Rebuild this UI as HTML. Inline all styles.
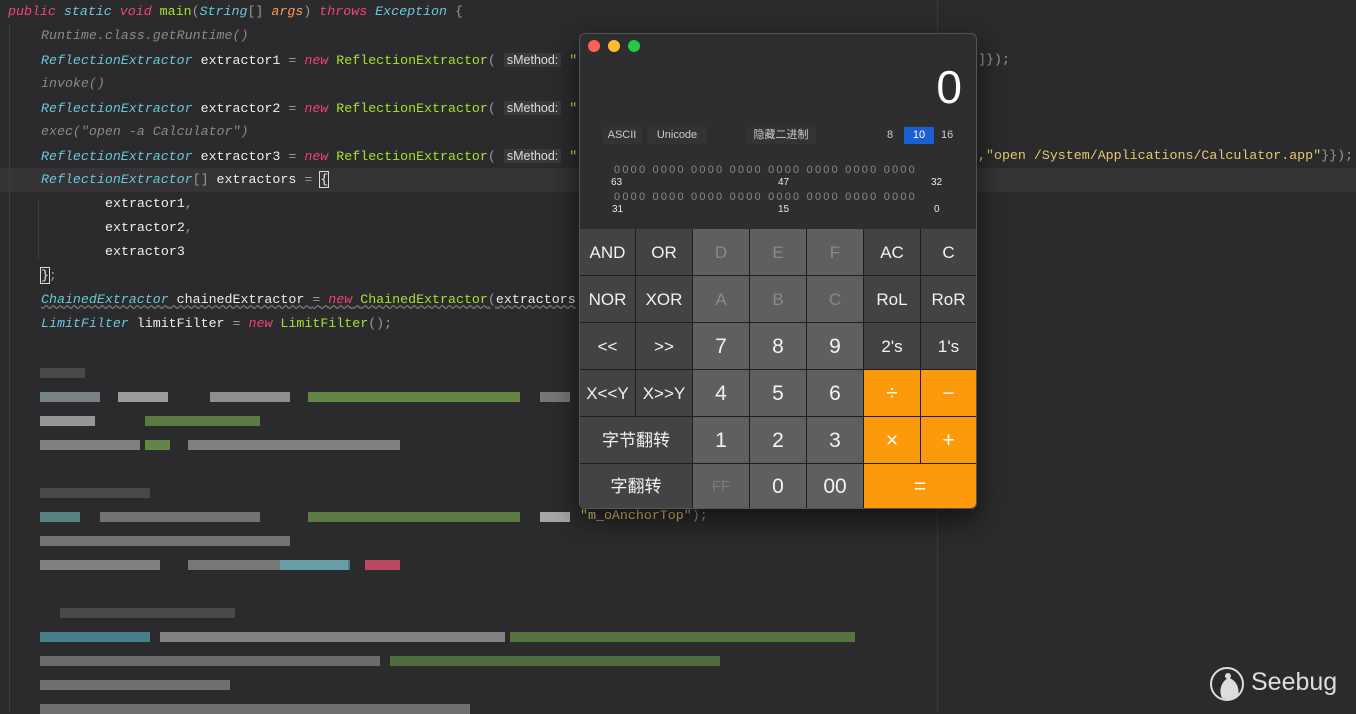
<!DOCTYPE html>
<html><head><meta charset="utf-8"><style>
*{margin:0;padding:0;box-sizing:border-box}
body{width:1356px;height:712px;overflow:hidden;background:#2b2b2d;position:relative;font-family:"Liberation Mono",monospace;font-size:13.3px;color:#eee}
.l{position:absolute;white-space:pre;height:24px;line-height:24px}
.k{color:#f0437a;font-style:italic}
.t{color:#67c7dc;font-style:italic}
.g{color:#a6e22e}
.o{color:#fd9a4f;font-style:italic}
.c{color:#8a8a8a;font-style:italic}
.p{color:#999}
.s{color:#e6c86e}
.h{background:#3a3a3c;color:#ddd;font-family:"Liberation Sans",sans-serif;font-size:12.5px;padding:0 3px;border-radius:2px}
.b{position:absolute;background:#434345;color:#f2f2f2;font-family:"Liberation Sans","Noto Sans CJK SC",sans-serif;font-size:17px;line-height:1;display:flex;align-items:center;justify-content:center}
.b span{display:block;line-height:1}
.d{background:#5f5f61;font-size:21px}
.x{color:#8a8a8c}
.or{background:#fd9a0c;color:#fff;font-size:21px}
.px{position:absolute;height:10px}
.bits{position:absolute;font-family:"Liberation Sans",sans-serif;font-size:11px;color:#8a8a8a;letter-spacing:2.2px;white-space:pre}
.bn{position:absolute;font-family:"Liberation Sans",sans-serif;font-size:10px;color:#e8e8e8}
</style></head><body>
<div style="position:absolute;left:0;top:168px;width:1356px;height:24px;background:#353336"></div>
<div style="position:absolute;left:937px;top:0;width:1px;height:712px;background:#3a3a3c"></div>
<div style="position:absolute;left:9px;top:24px;width:1px;height:688px;background:#3c3c3e"></div>
<div style="position:absolute;left:38px;top:200px;width:1px;height:60px;background:#3c3c3e"></div>

<div class="l" style="left:8px;top:0"><span class="k">public</span> <span class="t">static</span> <span class="k">void</span> <span class="g">main</span><span class="p">(</span><span class="t">String</span><span class="p">[]</span> <span class="o">args</span><span class="p">)</span> <span class="k">throws</span> <span class="t">Exception</span> <span class="p">{</span></div>
<div class="l c" style="left:41px;top:24px">Runtime.class.getRuntime()</div>
<div class="l" style="left:41px;top:48px"><span class="t">ReflectionExtractor</span> extractor1 <span class="p">=</span> <span class="k">new</span> <span class="g">ReflectionExtractor</span><span class="p">(</span> <span class="h">sMethod:</span> <span class="s">"</span></div>
<div class="l c" style="left:41px;top:72px">invoke()</div>
<div class="l" style="left:41px;top:96px"><span class="t">ReflectionExtractor</span> extractor2 <span class="p">=</span> <span class="k">new</span> <span class="g">ReflectionExtractor</span><span class="p">(</span> <span class="h">sMethod:</span> <span class="s">"</span></div>
<div class="l c" style="left:41px;top:120px">exec("open -a Calculator")</div>
<div class="l" style="left:41px;top:144px"><span class="t">ReflectionExtractor</span> extractor3 <span class="p">=</span> <span class="k">new</span> <span class="g">ReflectionExtractor</span><span class="p">(</span> <span class="h">sMethod:</span> <span class="s">"</span></div>
<div class="l" style="left:41px;top:168px"><span class="t">ReflectionExtractor</span><span class="p">[]</span> extractors <span class="p">=</span> <span style="outline:1px solid #ddd">{</span></div>
<div class="l" style="left:105px;top:192px">extractor1<span class="p">,</span></div>
<div class="l" style="left:105px;top:216px">extractor2<span class="p">,</span></div>
<div class="l" style="left:105px;top:240px">extractor3</div>
<div class="l" style="left:41px;top:264px"><span style="outline:1px solid #ddd">}</span><span class="p">;</span></div>
<div class="l" style="left:41px;top:288px;text-decoration:underline wavy #777"><span class="t">ChainedExtractor</span> chainedExtractor <span class="p">=</span> <span class="k">new</span> <span class="g">ChainedExtractor</span><span class="p">(</span>extractors</div>
<div class="l" style="left:41px;top:312px"><span class="t">LimitFilter</span> limitFilter <span class="p">=</span> <span class="k">new</span> <span class="g">LimitFilter</span><span class="p">();</span></div>
<div class="l" style="left:978px;top:48px"><span class="p">]});</span></div>
<div class="l" style="left:978px;top:144px"><span class="s">,"open /System/Applications/Calculator.app"</span><span class="p">}});</span></div>
<div class="l" style="left:580px;top:504px"><span class="s">"m_oAnchorTop"</span><span class="p">);</span></div>

<div class="px" style="left:40px;top:368px;width:45px;background:#555;opacity:.7"></div>
<div class="px" style="left:40px;top:392px;width:60px;background:#9aa;opacity:.7"></div>
<div class="px" style="left:118px;top:392px;width:50px;background:#ccc;opacity:.7"></div>
<div class="px" style="left:210px;top:392px;width:80px;background:#bbb;opacity:.7"></div>
<div class="px" style="left:308px;top:392px;width:212px;background:#7cae52;opacity:.7"></div>
<div class="px" style="left:540px;top:392px;width:30px;background:#999;opacity:.7"></div>
<div class="px" style="left:40px;top:416px;width:55px;background:#ddd;opacity:.6"></div>
<div class="px" style="left:145px;top:416px;width:115px;background:#7cae52;opacity:.6"></div>
<div class="px" style="left:40px;top:440px;width:100px;background:#bbb;opacity:.6"></div>
<div class="px" style="left:145px;top:440px;width:25px;background:#7cae52;opacity:.7"></div>
<div class="px" style="left:188px;top:440px;width:212px;background:#bbb;opacity:.6"></div>
<div class="px" style="left:40px;top:488px;width:110px;background:#555;opacity:.7"></div>
<div class="px" style="left:40px;top:512px;width:40px;background:#7bb;opacity:.6"></div>
<div class="px" style="left:100px;top:512px;width:160px;background:#bbb;opacity:.5"></div>
<div class="px" style="left:308px;top:512px;width:212px;background:#7cae52;opacity:.6"></div>
<div class="px" style="left:540px;top:512px;width:30px;background:#ddd;opacity:.7"></div>
<div class="px" style="left:40px;top:536px;width:250px;background:#bbb;opacity:.5"></div>
<div class="px" style="left:40px;top:560px;width:120px;background:#bbb;opacity:.6"></div>
<div class="px" style="left:188px;top:560px;width:160px;background:#aaa;opacity:.6"></div>
<div class="px" style="left:280px;top:560px;width:70px;background:#5ab8c8;opacity:.6"></div>
<div class="px" style="left:365px;top:560px;width:35px;background:#e05070;opacity:.8"></div>
<div class="px" style="left:60px;top:608px;width:175px;background:#555;opacity:.7"></div>
<div class="px" style="left:40px;top:632px;width:110px;background:#5ab8c8;opacity:.6"></div>
<div class="px" style="left:160px;top:632px;width:345px;background:#ccc;opacity:.55"></div>
<div class="px" style="left:510px;top:632px;width:345px;background:#7cae52;opacity:.55"></div>
<div class="px" style="left:40px;top:656px;width:340px;background:#aaa;opacity:.5"></div>
<div class="px" style="left:390px;top:656px;width:330px;background:#7cae52;opacity:.5"></div>
<div class="px" style="left:40px;top:680px;width:190px;background:#aaa;opacity:.55"></div>
<div class="px" style="left:40px;top:704px;width:430px;background:#aaa;opacity:.55"></div>

<div style="position:absolute;left:579px;top:33px;width:398px;height:476px;background:#2e2e30;border:1px solid #555;border-radius:6px;overflow:hidden;box-shadow:0 10px 30px rgba(0,0,0,.6)">
 <div style="position:absolute;left:8px;top:6px;width:12px;height:12px;border-radius:50%;background:#fe5f57"></div>
 <div style="position:absolute;left:28px;top:6px;width:12px;height:12px;border-radius:50%;background:#febc2e"></div>
 <div style="position:absolute;left:48px;top:6px;width:12px;height:12px;border-radius:50%;background:#28c840"></div>
 <div style="position:absolute;right:14px;top:26px;font-family:'Liberation Sans',sans-serif;font-size:46px;font-weight:300;color:#fff">0</div>
 <div style="position:absolute;left:22px;top:93px;width:40px;height:17px;background:#333335;font:11px 'Liberation Sans',sans-serif;color:#ccc;text-align:center;line-height:17px">ASCII</div>
 <div style="position:absolute;left:67px;top:93px;width:60px;height:17px;background:#333335;font:11px 'Liberation Sans',sans-serif;color:#ccc;text-align:center;line-height:17px">Unicode</div>
 <div style="position:absolute;left:166px;top:93px;width:70px;height:17px;background:#333335;font:11px 'Liberation Sans','Noto Sans CJK SC',sans-serif;color:#ccc;text-align:center;line-height:17px">隐藏二进制</div>
 <div style="position:absolute;left:307px;top:93px;font:11px 'Liberation Sans',sans-serif;color:#ccc;line-height:17px">8</div>
 <div style="position:absolute;left:324px;top:93px;width:30px;height:17px;background:#1b5fd3;font:11px 'Liberation Sans',sans-serif;color:#fff;text-align:center;line-height:17px">10</div>
 <div style="position:absolute;left:361px;top:93px;font:11px 'Liberation Sans',sans-serif;color:#ccc;line-height:17px">16</div>
 <div class="bits" style="left:34px;top:130px">0000 0000 0000 0000 0000 0000 0000 0000</div>
 <div class="bits" style="left:34px;top:157px">0000 0000 0000 0000 0000 0000 0000 0000</div>
 <div class="bn" style="left:31px;top:143px">63</div><div class="bn" style="left:198px;top:143px">47</div><div class="bn" style="left:351px;top:143px">32</div>
 <div class="bn" style="left:32px;top:170px">31</div><div class="bn" style="left:198px;top:170px">15</div><div class="bn" style="left:354px;top:170px">0</div>
 <div style="position:absolute;left:0;top:195px;width:398px;height:281px;background:#1e1e20"></div>
</div>
<div class="b" style="left:580px;top:229px;width:55px;height:46px">AND</div>
<div class="b" style="left:636px;top:229px;width:56px;height:46px">OR</div>
<div class="b d x" style="left:693px;top:229px;width:56px;height:46px;font-size:17px">D</div>
<div class="b d x" style="left:750px;top:229px;width:56px;height:46px;font-size:17px">E</div>
<div class="b d x" style="left:807px;top:229px;width:56px;height:46px;font-size:17px">F</div>
<div class="b" style="left:864px;top:229px;width:56px;height:46px">AC</div>
<div class="b" style="left:921px;top:229px;width:55px;height:46px">C</div>

<div class="b" style="left:580px;top:276px;width:55px;height:46px">NOR</div>
<div class="b" style="left:636px;top:276px;width:56px;height:46px">XOR</div>
<div class="b d x" style="left:693px;top:276px;width:56px;height:46px;font-size:17px">A</div>
<div class="b d x" style="left:750px;top:276px;width:56px;height:46px;font-size:17px">B</div>
<div class="b d x" style="left:807px;top:276px;width:56px;height:46px;font-size:17px">C</div>
<div class="b" style="left:864px;top:276px;width:56px;height:46px">RoL</div>
<div class="b" style="left:921px;top:276px;width:55px;height:46px">RoR</div>

<div class="b" style="left:580px;top:323px;width:55px;height:46px">&lt;&lt;</div>
<div class="b" style="left:636px;top:323px;width:56px;height:46px">&gt;&gt;</div>
<div class="b d" style="left:693px;top:323px;width:56px;height:46px">7</div>
<div class="b d" style="left:750px;top:323px;width:56px;height:46px">8</div>
<div class="b d" style="left:807px;top:323px;width:56px;height:46px">9</div>
<div class="b" style="left:864px;top:323px;width:56px;height:46px">2's</div>
<div class="b" style="left:921px;top:323px;width:55px;height:46px">1's</div>

<div class="b" style="left:580px;top:370px;width:55px;height:46px">X&lt;&lt;Y</div>
<div class="b" style="left:636px;top:370px;width:56px;height:46px">X&gt;&gt;Y</div>
<div class="b d" style="left:693px;top:370px;width:56px;height:46px">4</div>
<div class="b d" style="left:750px;top:370px;width:56px;height:46px">5</div>
<div class="b d" style="left:807px;top:370px;width:56px;height:46px">6</div>
<div class="b or" style="left:864px;top:370px;width:56px;height:46px">÷</div>
<div class="b or" style="left:921px;top:370px;width:55px;height:46px">−</div>

<div class="b" style="left:580px;top:417px;width:112px;height:46px"><span>字节翻转</span></div>
<div class="b d" style="left:693px;top:417px;width:56px;height:46px">1</div>
<div class="b d" style="left:750px;top:417px;width:56px;height:46px">2</div>
<div class="b d" style="left:807px;top:417px;width:56px;height:46px">3</div>
<div class="b or" style="left:864px;top:417px;width:56px;height:46px">×</div>
<div class="b or" style="left:921px;top:417px;width:55px;height:46px">+</div>

<div class="b" style="left:580px;top:464px;width:112px;height:44px;border-radius:0 0 0 5px"><span>字翻转</span></div>
<div class="b d x" style="left:693px;top:464px;width:56px;height:44px;font-size:15px;color:#7a7a7c">FF</div>
<div class="b d" style="left:750px;top:464px;width:56px;height:44px">0</div>
<div class="b d" style="left:807px;top:464px;width:56px;height:44px">00</div>
<div class="b or" style="left:864px;top:464px;width:112px;height:44px;border-radius:0 0 5px 0">=</div>

<svg style="position:absolute;left:1208px;top:664px" width="40" height="40" viewBox="0 0 40 40">
<circle cx="19" cy="20" r="16" fill="none" stroke="#ddd" stroke-width="2"/>
<path d="M14 34 C10 26 14 16 21 14 C28 16 32 24 30 32 C26 35 19 36 14 34Z" fill="#ddd"/>
<circle cx="20" cy="12" r="3" fill="#ddd"/>
</svg>
<div style="position:absolute;left:1251px;top:668px;font-family:'Liberation Sans',sans-serif;font-size:25px;color:#ddd">Seebug</div>
</body></html>
